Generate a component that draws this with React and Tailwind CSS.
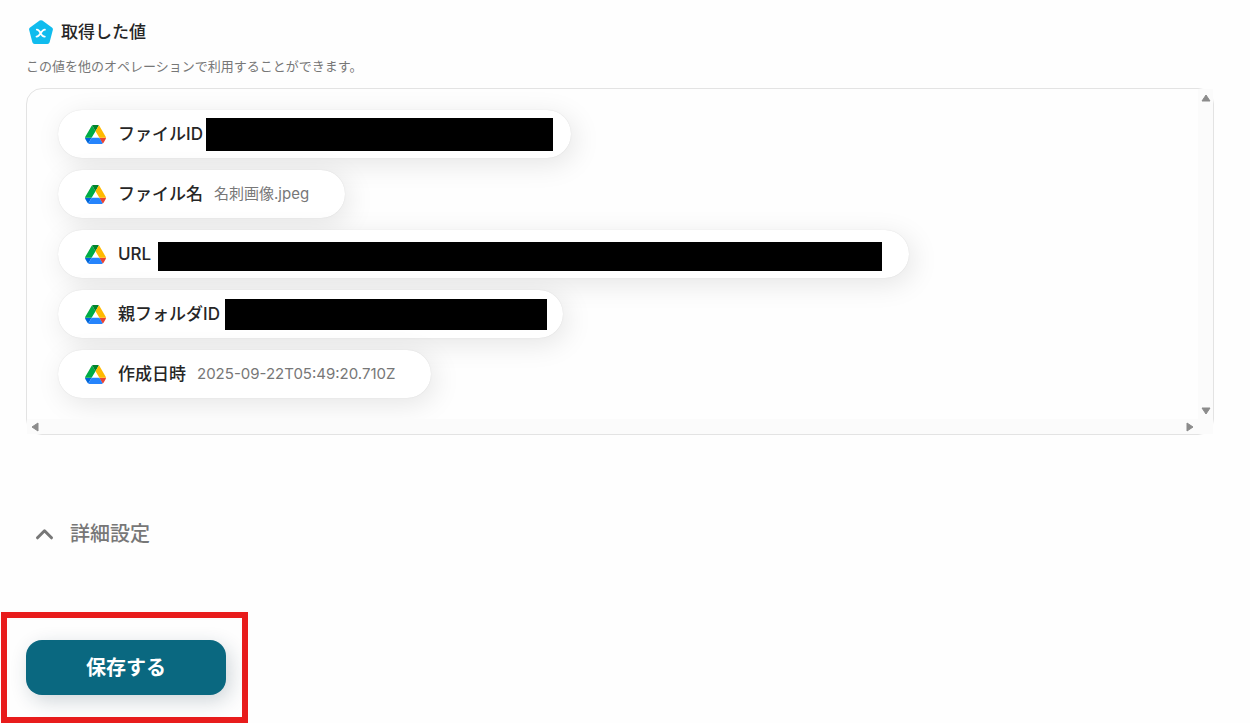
import React, { useState } from "react";

// masked values are drawn as a solid bar
const fields = [
  { label: "ファイルID", pill: "pr-[18px] gap-[3px]", mask: "w-[347px] h-[33px]" },
  { label: "ファイル名", pill: "pr-9 gap-[11px]", value: "名刺画像.jpeg" },
  { label: "URL", pill: "pr-[27px] gap-[7px]", mask: "w-[724px] h-[29px] mt-1" },
  { label: "親フォルダID", pill: "pr-4 gap-[5px]", mask: "w-[322px] h-[31px]" },
  { label: "作成日時", pill: "pr-9 gap-[11px]", value: "2025-09-22T05:49:20.710Z" },
];

const ValueIcon = () => (
  <svg viewBox="0 0 24 24" className="w-6 h-6 shrink-0" aria-hidden="true">
    <path
      d="M12 2.5 21.6 9.3 18.4 21.6 5.6 21.6 2.4 9.3Z"
      fill="#10bcee"
      stroke="#10bcee"
      strokeWidth="4.6"
      strokeLinejoin="round"
    />
    <path
      d="M7.8 9.6C11.6 9.2 11.2 17 15.8 16.6M15.9 9.6C11.9 9.4 11.6 16.8 7.5 16.6"
      fill="none"
      stroke="#fff"
      strokeWidth="1.8"
      strokeLinecap="round"
    />
  </svg>
);

const DriveIcon = () => (
  <svg viewBox="0 0 87.3 78" className="w-[21px] h-[19px] shrink-0" aria-hidden="true">
    <path d="m6.6 66.85 3.85 6.65c.8 1.4 1.95 2.5 3.3 3.3l13.75-23.8h-27.5c0 1.55.4 3.1 1.2 4.5z" fill="#0066da" />
    <path d="m43.65 25-13.75-23.8c-1.35.8-2.5 1.9-3.3 3.3l-25.4 44a9.06 9.06 0 0 0-1.2 4.5h27.5z" fill="#00ac47" />
    <path d="m73.55 76.8c1.35-.8 2.5-1.9 3.3-3.3l1.6-2.75 7.65-13.25c.8-1.4 1.2-2.95 1.2-4.5h-27.502l5.852 11.5z" fill="#ea4335" />
    <path d="m43.65 25 13.75-23.8c-1.35-.8-2.9-1.2-4.5-1.2h-18.5c-1.6 0-3.15.45-4.5 1.2z" fill="#00832d" />
    <path d="m59.8 53h-32.3l-13.75 23.8c1.35.8 2.9 1.2 4.5 1.2h50.8c1.6 0 3.15-.45 4.5-1.2z" fill="#2684fc" />
    <path d="m73.4 26.5-12.7-22c-.8-1.4-1.95-2.5-3.3-3.3l-13.75 23.8 16.15 28h27.45c0-1.55-.4-3.1-1.2-4.5z" fill="#ffba00" />
  </svg>
);

const Arrow = ({ className }) => (
  <svg viewBox="0 0 10 8" className={`w-[10px] h-2 shrink-0 ${className}`} aria-hidden="true">
    <path d="M5 1 9 7H1Z" fill="#8b8b8b" stroke="#8b8b8b" strokeWidth="1" strokeLinejoin="round" />
  </svg>
);

const App = () => {
  const [open, setOpen] = useState(false);

  return (
    <main className="pl-[26px] pr-9 pt-5 text-[#262626] bg-[#fefefe] font-['Inter','Noto_Sans_CJK_JP',sans-serif]">
      <div className="flex items-center gap-2 pl-[3px] h-6">
        <ValueIcon />
        <h2 className="text-[17px] leading-6 font-medium">取得した値</h2>
      </div>
      <p className="mt-3 text-[13px] leading-5 text-[#777]">
        この値を他のオペレーションで利用することができます。
      </p>

      <section className="mt-3 grid grid-cols-[minmax(0,1fr)_15px] border border-[#e3e3e3] rounded-2xl">
        <ul className="flex flex-col items-start gap-3 py-[21px] pl-[31px] overflow-hidden rounded-tl-2xl">
          {fields.map((field) => (
            <li
              key={field.label}
              className={`flex items-center h-12 pl-[27px] rounded-full bg-white shadow-[0_0_1px_rgba(0,0,0,0.14),4px_6px_28px_rgba(0,0,0,0.10)] whitespace-nowrap ${field.pill}`}
            >
              <span className="flex items-center gap-3">
                <DriveIcon />
                <span className="text-[17px] leading-6 font-medium">{field.label}</span>
              </span>
              {field.mask ? (
                <span className={`bg-black ${field.mask}`} />
              ) : (
                <span className="text-[15px] leading-6 text-[#777]">{field.value}</span>
              )}
            </li>
          ))}
        </ul>
        <div className="flex flex-col items-center justify-between bg-[#fbfbfb] pt-[5px] pb-1">
          <Arrow className="" />
          <Arrow className="rotate-180" />
        </div>
        <div className="flex items-center justify-between h-[15px] bg-[#fbfbfb] px-[3px]">
          <Arrow className="-rotate-90" />
          <Arrow className="rotate-90" />
        </div>
        <div className="bg-[#fbfbfb]" />
      </section>

      <button
        type="button"
        aria-expanded={open}
        onClick={() => setOpen(!open)}
        className="mt-[87px] ml-[9px] flex items-center gap-4 text-xl leading-6 font-medium text-[#777]"
      >
        <svg viewBox="0 0 19 12" className="w-[19px] h-3" aria-hidden="true">
          <path d="m2.5 9.8 7-7 7 7" fill="none" stroke="#777" strokeWidth="3" strokeLinecap="round" strokeLinejoin="round" />
        </svg>
        詳細設定
      </button>

      <div className="mt-[66px] -ml-[25px] w-fit border-[6px] border-[#e81c1c] pt-[22px] pb-[22px] pl-[19px] pr-4">
        <button
          type="button"
          className="block w-[200px] h-[55px] rounded-2xl bg-[#0a6880] text-xl font-bold text-white shadow-[4px_6px_20px_rgba(20,50,70,0.2)]"
        >
          保存する
        </button>
      </div>
    </main>
  );
};

export default App;
